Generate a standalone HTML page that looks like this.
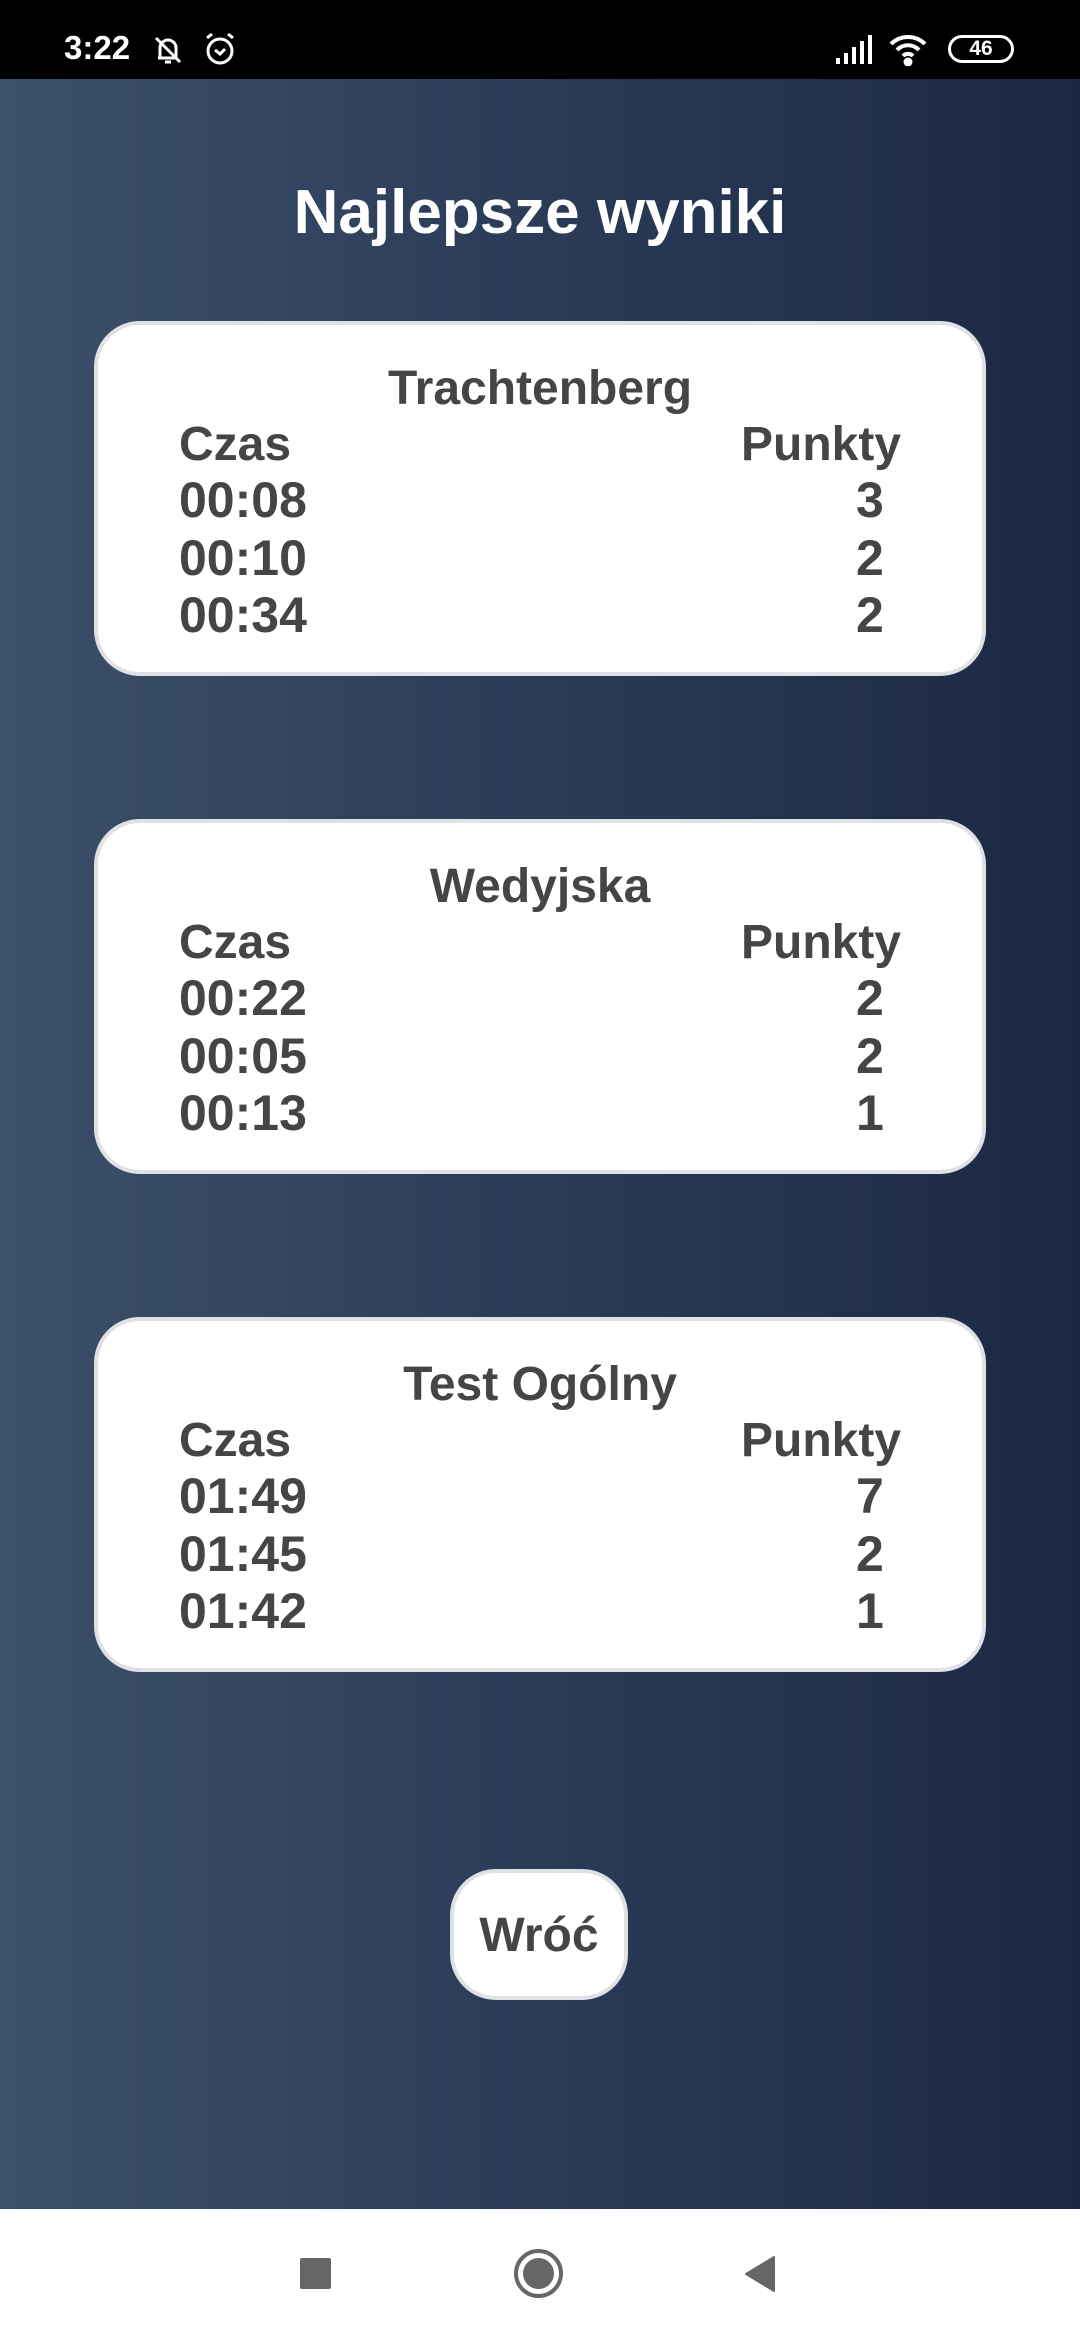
<!DOCTYPE html>
<html><head><meta charset="utf-8"><style>
*{margin:0;padding:0;box-sizing:border-box}
body{width:1080px;height:2340px;position:relative;overflow:hidden;font-family:"Liberation Sans",sans-serif;font-weight:bold;background:#fff}
.sb{position:absolute;left:0;top:0;width:1080px;height:79px;background:#000;color:#fff}
.main{position:absolute;left:0;top:79px;width:1080px;height:2130px;background:linear-gradient(90deg,#3c5069 0%,#2e3f5c 40%,#1b2843 100%)}
.t{position:absolute;white-space:nowrap;transform-origin:left center}
.c{transform:translateX(-50%);transform-origin:center}
.card{position:absolute;left:94px;width:892px;height:355px;background:#fff;border:4px solid #dfe1e4;border-radius:46px}
.card .t{color:#454545;font-size:48px;line-height:56px}
.card .n{font-size:50px}
.nav{position:absolute;left:0;top:2209px;width:1080px;height:131px;background:#fff}
</style></head><body>
<div class="sb">
 <div class="t" style="left:64px;top:29px;font-size:33px;line-height:38px">3:22</div>
 <svg style="position:absolute;left:150px;top:32px" width="36" height="36" viewBox="0 0 36 36" fill="none" stroke="#fff" stroke-width="3"><path d="M10 26V16a8 8 0 0 1 16 0v10H8M15 30h6M6 6l24 24"/></svg>
 <svg style="position:absolute;left:202px;top:30px" width="36" height="38" viewBox="0 0 36 38" fill="none" stroke="#fff" stroke-width="3"><circle cx="18" cy="21" r="12"/><path d="M13 20l5 4 5-5M5 8l5-4M31 8l-5-4"/></svg>
 <svg style="position:absolute;left:834px;top:34px" width="40" height="30" viewBox="0 0 40 30" fill="#fff"><rect x="2" y="24" width="4" height="6"/><rect x="10" y="19" width="4" height="11"/><rect x="18" y="13" width="4" height="17"/><rect x="26" y="7" width="4" height="23"/><rect x="34" y="1" width="4" height="29"/></svg>
 <svg style="position:absolute;left:888px;top:32px" width="40" height="34" viewBox="0 0 40 34" fill="none" stroke="#fff" stroke-width="4"><path d="M3 12a24 24 0 0 1 34 0M9 18a15 15 0 0 1 22 0M15 24a7 7 0 0 1 10 0"/><circle cx="20" cy="30" r="2.5" fill="#fff"/></svg>
 <div style="position:absolute;left:948px;top:35px;width:66px;height:28px;border:3px solid #fff;border-radius:14px;color:#fff;font-size:21px;line-height:22px;text-align:center">46</div>
</div>
<div class="main">
 <div class="t c" style="left:540px;top:99px;font-size:62px;line-height:70px;color:#fff">Najlepsze wyniki</div>
</div>

<div class="card" style="top:321px">
 <div class="t c" style="left:442px;top:36px">Trachtenberg</div>
 <div class="t" style="left:81px;top:92px">Czas</div>
 <div class="t" style="left:643px;top:92px">Punkty</div>
 <div class="t n" style="left:81px;top:147px">00:08</div>
 <div class="t n" style="left:758px;top:147px">3</div>
 <div class="t n" style="left:81px;top:205px">00:10</div>
 <div class="t n" style="left:758px;top:205px">2</div>
 <div class="t n" style="left:81px;top:262px">00:34</div>
 <div class="t n" style="left:758px;top:262px">2</div>
</div>

<div class="card" style="top:819px">
 <div class="t c" style="left:442px;top:36px">Wedyjska</div>
 <div class="t" style="left:81px;top:92px">Czas</div>
 <div class="t" style="left:643px;top:92px">Punkty</div>
 <div class="t n" style="left:81px;top:147px">00:22</div>
 <div class="t n" style="left:758px;top:147px">2</div>
 <div class="t n" style="left:81px;top:205px">00:05</div>
 <div class="t n" style="left:758px;top:205px">2</div>
 <div class="t n" style="left:81px;top:262px">00:13</div>
 <div class="t n" style="left:758px;top:262px">1</div>
</div>

<div class="card" style="top:1317px">
 <div class="t c" style="left:442px;top:36px">Test Ogólny</div>
 <div class="t" style="left:81px;top:92px">Czas</div>
 <div class="t" style="left:643px;top:92px">Punkty</div>
 <div class="t n" style="left:81px;top:147px">01:49</div>
 <div class="t n" style="left:758px;top:147px">7</div>
 <div class="t n" style="left:81px;top:205px">01:45</div>
 <div class="t n" style="left:758px;top:205px">2</div>
 <div class="t n" style="left:81px;top:262px">01:42</div>
 <div class="t n" style="left:758px;top:262px">1</div>
</div>

<div style="position:absolute;left:450px;top:1869px;width:178px;height:131px;background:#fff;border:4px solid #dfe1e4;border-radius:46px">
 <div class="t c" style="left:85px;top:35px;font-size:48px;line-height:56px;color:#454545">Wróć</div>
</div>

<div class="nav">
 <div style="position:absolute;left:300px;top:49px;width:31px;height:31px;background:#666;border-radius:2px"></div>
 <div style="position:absolute;left:514px;top:40px;width:49px;height:49px;border:4px solid #666;border-radius:50%"></div>
 <div style="position:absolute;left:523px;top:49px;width:31px;height:31px;background:#666;border-radius:50%"></div>
 <svg style="position:absolute;left:742px;top:46px" width="36" height="38" viewBox="0 0 36 38"><path d="M32 2L4 19l28 17z" fill="#666" stroke="#666" stroke-width="2" stroke-linejoin="round"/></svg>
</div>
</body></html>
